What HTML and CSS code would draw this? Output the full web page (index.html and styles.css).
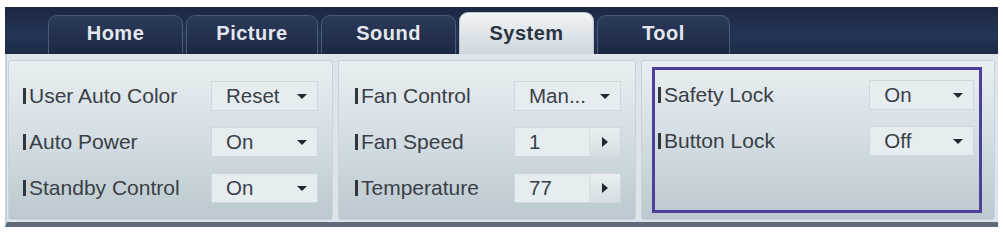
FILE: index.html
```html
<!DOCTYPE html>
<html lang="en">
<head>
  <meta charset="UTF-8" />
  <title>System</title>
  <link rel="stylesheet" href="styles.css">
</head>
<body>
  <div class="screen">
    <div class="tabbar">
      <div class="tab">Home</div>
      <div class="tab">Picture</div>
      <div class="tab">Sound</div>
      <div class="tab active">System</div>
      <div class="tab">Tool</div>
    </div>
    <div class="content">
      <div class="panel p1">
        <div class="row"><span class="label">User Auto Color</span><div class="select"><span>Reset</span><i class="down"></i></div></div>
        <div class="row"><span class="label">Auto Power</span><div class="select"><span>On</span><i class="down"></i></div></div>
        <div class="row"><span class="label">Standby Control</span><div class="select"><span>On</span><i class="down"></i></div></div>
      </div>
      <div class="panel p2">
        <div class="row"><span class="label">Fan Control</span><div class="select"><span>Man...</span><i class="down"></i></div></div>
        <div class="row"><span class="label">Fan Speed</span><div class="select spin"><span>1</span><b class="step"><i class="right"></i></b></div></div>
        <div class="row"><span class="label">Temperature</span><div class="select spin"><span>77</span><b class="step"><i class="right"></i></b></div></div>
      </div>
      <div class="panel p3">
        <div class="focus">
          <div class="row"><span class="label">Safety Lock</span><div class="select"><span>On</span><i class="down"></i></div></div>
          <div class="row"><span class="label">Button Lock</span><div class="select"><span>Off</span><i class="down"></i></div></div>
        </div>
      </div>
    </div>
  </div>
</body>
</html>
```

FILE: styles.css
```css
body {
  margin: 0;
  background: #fff;
  font-family: "Liberation Sans", Arial, sans-serif;
}

.screen {
  margin: 7px 5px 0 5px;
  width: 993px;
}

.tabbar {
  height: 47px;
  background: linear-gradient(#1c2842, #233455 60%, #1d2b47);
  display: flex;
  align-items: flex-end;
  padding-left: 43px;
  gap: 3px;
  box-sizing: border-box;
}

.tab {
  width: 135px;
  height: 39px;
  box-sizing: border-box;
  border: 1px solid #4a5a78;
  border-bottom: none;
  border-radius: 9px 9px 0 0;
  background: linear-gradient(#2c3b5a, #1f2d4a 70%, #1b2842);
  color: #e4e8ee;
  font-weight: bold;
  font-size: 20px;
  letter-spacing: 0.5px;
  text-align: center;
  padding-top: 6px;
}

.tab:nth-child(2) { width: 132px; }
.tab:nth-child(5) { width: 133px; }

.tab.active {
  height: 42px;
  padding-top: 9px;
  background: linear-gradient(#f2f5f7, #dbe2e7 60%, #cfd8de);
  border-color: #b8c4cc;
  color: #2b3441;
}

.content {
  background: #dde5ea;
  border-left: 2px solid #c8d2d8;
  border-bottom: 5px solid #5d6b79;
  display: flex;
  gap: 5px;
  padding: 6px 3px 2px 1px;
  box-sizing: border-box;
  height: 173px;
}

.panel {
  height: 160px;
  box-sizing: border-box;
  border: 1px solid #c9d2d8;
  border-radius: 3px;
  background: linear-gradient(#e8eff2, #d3dde3 50%, #bcc8cf);
  padding: 20px 0 0 14px;
}

.p1 { width: 325px; }
.p2 { width: 298px; padding-left: 16px; }
.p3 { width: 354px; padding: 6px 12px 6px 10px; }

.focus {
  height: 100%;
  box-sizing: border-box;
  border: 3px solid #4d3f9c;
  padding: 10px 5px 0 3px;
}

.row {
  display: flex;
  align-items: center;
  height: 30px;
  margin-bottom: 16px;
}

.label {
  width: 188px;
  font-size: 21px;
  color: #3a3f45;
  display: flex;
  align-items: center;
}

.p2 .label { width: 159px; }
.p3 .label { width: 215px; }

.label::before {
  content: "";
  width: 3px;
  height: 16px;
  background: #30363c;
  margin-right: 3px;
}

.select {
  width: 107px;
  height: 30px;
  box-sizing: border-box;
  border: 1px solid #cfd7dc;
  background: #e6edf1;
  display: flex;
  align-items: center;
  justify-content: space-between;
  padding: 0 10px 0 14px;
  font-size: 20.5px;
  color: #3a4047;
}

.p3 .select { width: 106px; }

.down {
  width: 0;
  height: 0;
  border-left: 5px solid transparent;
  border-right: 5px solid transparent;
  border-top: 5px solid #22282e;
}

.spin {
  padding-right: 0;
}

.step {
  width: 30px;
  height: 100%;
  background: linear-gradient(#e8eef1, #d6dee3);
  border-left: 1px solid #d8e0e4;
  display: flex;
  align-items: center;
  justify-content: center;
}

.right {
  width: 0;
  height: 0;
  border-top: 5px solid transparent;
  border-bottom: 5px solid transparent;
  border-left: 6px solid #22282e;
}
```
